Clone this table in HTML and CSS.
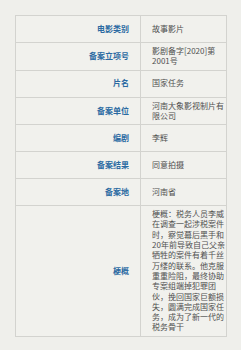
FILE: index.html
```html
<!DOCTYPE html>
<html lang="zh">
<head>
<meta charset="utf-8">
<link rel="stylesheet" href="styles.css">
</head>
<body>
<table class="info">
  <tr><th class="label">电影类别</th><td class="value">故事影片</td></tr>
  <tr><th class="label">备案立项号</th><td class="value">影剧备字[2020]第2001号</td></tr>
  <tr><th class="label">片名</th><td class="value">国家任务</td></tr>
  <tr><th class="label">备案单位</th><td class="value">河南大象影视制片有限公司</td></tr>
  <tr><th class="label">编剧</th><td class="value">李辉</td></tr>
  <tr><th class="label">备案结果</th><td class="value">同意拍摄</td></tr>
  <tr><th class="label">备案地</th><td class="value">河南省</td></tr>
  <tr><th class="label">梗概</th><td class="value">梗概：税务人员李威在调查一起涉税案件时，察觉幕后黑手和20年前导致自己父亲牺牲的案件有着千丝万缕的联系。他克服重重险阻，最终协助专案组端掉犯罪团伙，挽回国家巨额损失，圆满完成国家任务，成为了新一代的税务骨干</td></tr>
</table>
</body>
</html>
```
FILE: styles.css
```css
html, body {
  margin: 0;
  padding: 0;
  background: #efefeb;
}
body {
  padding: 15px 14px 15px 15px;
  font-family: "Noto Sans CJK SC", "Noto Sans", sans-serif;
}
.info {
  border-collapse: collapse;
  width: 212px;
  table-layout: fixed;
  background: #f1f1ed;
  border: 1px solid #d3d3cf;
}
.info th,
.info td {
  border: 1px solid #d3d3cf;
  height: 20px;
  padding: 3px 0;
  font-size: 8px;
  line-height: 10.3px;
  vertical-align: middle;
}
.label {
  width: 113px;
  padding-right: 11px !important;
  text-align: right;
  color: #2b6aa2;
  font-weight: bold;
}
.value {
  padding-left: 11px !important;
  padding-right: 1px !important;
  text-align: left;
  color: #505050;
  font-weight: normal;
}
```
